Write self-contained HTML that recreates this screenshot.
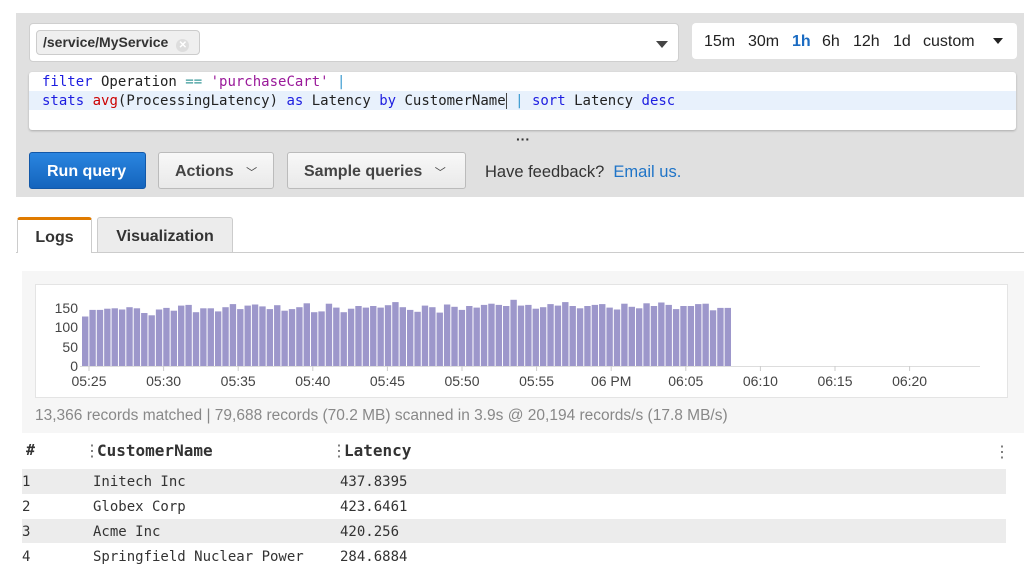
<!DOCTYPE html>
<html><head><meta charset="utf-8"><style>
*{box-sizing:border-box;margin:0;padding:0}
body{width:1024px;height:573px;background:#fff;font-family:"Liberation Sans",sans-serif;position:relative;overflow:hidden;color:#222}
.a{position:absolute}
.mono{font-family:"DejaVu Sans Mono","Liberation Mono",monospace}
.btn{position:absolute;top:152px;height:37px;border:1px solid #bbb;border-radius:3px;background:linear-gradient(#f8f8f8,#e9e9e9);font-weight:bold;font-size:16px;color:#444;line-height:38px;padding-left:16px}
.r{position:absolute;font-family:"DejaVu Sans Mono","Liberation Mono",monospace;font-size:14px;color:#333}
</style></head><body>
<div class="a" style="left:16px;top:13px;width:1008px;height:184px;background:#e0e0e0"></div>
<div class="a" style="left:29px;top:23px;width:650px;height:39px;background:#fff;border:1px solid #cfcfcf;border-radius:4px"></div>
<div class="a" style="left:36px;top:30px;width:164px;height:25px;background:#efefef;border:1px solid #ccc;border-radius:4px;font-size:14px;font-weight:bold;color:#333;line-height:23px;padding-left:6px">/service/MyService<span style="display:inline-block;width:13px;height:13px;border-radius:50%;background:#ddd;color:#fff;font-size:10px;line-height:13px;text-align:center;margin-left:8px;vertical-align:-1px">✕</span></div>
<div class="a" style="left:656px;top:41px;width:0;height:0;border-left:6px solid transparent;border-right:6px solid transparent;border-top:7px solid #444"></div>
<div class="a" style="left:692px;top:23px;width:325px;height:36px;background:#fff;border-radius:4px"></div>
<div class="a" style="left:704px;top:23px;font-size:16px;line-height:38px;color:#222;white-space:pre"><span>15m</span><span class="a" style="left:44px">30m</span><span class="a" style="left:88px;font-weight:bold;color:#1a6bc2">1h</span><span class="a" style="left:118px">6h</span><span class="a" style="left:149px">12h</span><span class="a" style="left:189px">1d</span><span class="a" style="left:219px">custom</span></div>
<div class="a" style="left:993px;top:38px;width:0;height:0;border-left:5px solid transparent;border-right:5px solid transparent;border-top:6px solid #222"></div>
<div class="a" style="left:29px;top:72px;width:987px;height:58px;background:#fff;border-radius:3px;box-shadow:0 1px 2px #aaa"></div>
<div class="a" style="left:29px;top:91px;width:987px;height:19px;background:#e8f1fc"></div>
<div class="a mono" style="left:42px;top:73px;font-size:14px;line-height:19px;color:#222;white-space:pre"><span style="color:#1d1de0">filter</span> Operation <span style="color:#3a9a9a">==</span> <span style="color:#9a1a9a">'purchaseCart'</span> <span style="color:#3a9ad0">|</span>
<span style="color:#1d1de0">stats</span> <span style="color:#c00">avg</span>(ProcessingLatency) <span style="color:#1d1de0">as</span> Latency <span style="color:#1d1de0">by</span> CustomerName<span style="border-left:1px solid #444"></span> <span style="color:#3a9ad0">|</span> <span style="color:#1d1de0">sort</span> Latency <span style="color:#1d1de0">desc</span></div>
<div class="a" style="left:516px;top:131px;font-size:14px;font-weight:bold;color:#333">···</div>
<div class="btn" style="left:29px;width:117px;background:linear-gradient(#2a85e0,#1464bd);border-color:#1258a8;color:#fff;padding-left:17px">Run query</div>
<div class="btn" style="left:158px;width:116px">Actions <span style="font-weight:normal;font-size:11px;margin-left:8px">﹀</span></div>
<div class="btn" style="left:287px;width:179px">Sample queries <span style="font-weight:normal;font-size:11px;margin-left:8px">﹀</span></div>
<div class="a" style="left:485px;top:163px;font-size:16.5px;color:#333">Have feedback?&nbsp; <span style="color:#1f74c7">Email us.</span></div>
<div class="a" style="left:16px;top:252px;width:1008px;height:1px;background:#ccc"></div>
<div class="a" style="left:17px;top:217px;width:75px;height:36px;background:#fff;border:1px solid #ccc;border-top:3px solid #e07b00;border-bottom:none;border-radius:3px 3px 0 0;font-weight:bold;font-size:16px;color:#333;line-height:36px;text-align:center">Logs</div>
<div class="a" style="left:97px;top:217px;width:136px;height:35px;background:#ececec;border:1px solid #ccc;border-bottom:none;border-radius:3px 3px 0 0;font-weight:bold;font-size:16px;color:#333;line-height:37px;text-align:center">Visualization</div>
<div class="a" style="left:22px;top:271px;width:1002px;height:162px;background:#f6f6f6"></div>
<div class="a" style="left:35px;top:284px;width:973px;height:114px;background:#fff;border:1px solid #e4e4e4"></div>
<svg class="a" style="left:0;top:0" width="1024" height="573" id="ch" font-family="Liberation Sans" font-size="14" fill="#444"></svg>
<div class="a" style="left:35px;top:407px;font-size:15.5px;color:#888">13,366 records matched | 79,688 records (70.2 MB) scanned in 3.9s @ 20,194 records/s (17.8 MB/s)</div>
<div class="a mono" style="left:26px;top:441px;font-size:15px;font-weight:bold;color:#333">#</div>
<div class="a" style="left:84px;top:441px;font-size:16px;color:#666">⋮</div>
<div class="a mono" style="left:97px;top:441px;font-size:16px;font-weight:bold;color:#333">CustomerName</div>
<div class="a" style="left:331px;top:441px;font-size:16px;color:#666">⋮</div>
<div class="a mono" style="left:344px;top:441px;font-size:16px;font-weight:bold;color:#333">Latency</div>
<div class="a" style="left:994px;top:442px;font-size:16px;color:#666">⋮</div>
<div class="a" style="left:22px;top:469px;width:984px;height:25px;background:#ececec"></div>
<div class="a" style="left:22px;top:519px;width:984px;height:24px;background:#ececec"></div>
<div class="r" style="left:22px;top:474px">1</div><div class="r" style="left:93px;top:474px">Initech Inc</div><div class="r" style="left:340px;top:474px">437.8395</div>
<div class="r" style="left:22px;top:499px">2</div><div class="r" style="left:93px;top:499px">Globex Corp</div><div class="r" style="left:340px;top:499px">423.6461</div>
<div class="r" style="left:22px;top:524px">3</div><div class="r" style="left:93px;top:524px">Acme Inc</div><div class="r" style="left:340px;top:524px">420.256</div>
<div class="r" style="left:22px;top:549px">4</div><div class="r" style="left:93px;top:549px">Springfield Nuclear Power</div><div class="r" style="left:340px;top:549px">284.6884</div>
<script>
var s=document.getElementById('ch'),h='';
var v=[128,145,145,148,149,146,152,149,137,131,146,150,143,156,158,139,149,149,141,152,160,147,156,159,154,147,157,143,147,152,162,139,141,161,151,139,148,155,151,155,151,157,165,152,145,140,156,152,138,159,153,145,155,151,158,161,158,155,171,156,158,148,152,160,156,165,155,149,155,158,160,151,146,161,153,149,162,155,164,158,147,155,155,160,161,144,150,150];
var n=v.length,x0=82,w=650/n;
for(var i=0;i<n;i++){var hh=v[i]*0.387;h+='<rect x="'+(x0+i*w).toFixed(2)+'" y="'+(366-hh).toFixed(1)+'" width="'+(w-1).toFixed(2)+'" height="'+hh.toFixed(1)+'" fill="#9d97cb"/>';}
h+='<line x1="80" y1="366.5" x2="980" y2="366.5" stroke="#ddd"/>';
var t=['05:25','05:30','05:35','05:40','05:45','05:50','05:55','06 PM','06:05','06:10','06:15','06:20'];
for(var i=0;i<t.length;i++){var x=89+i*74.6;h+='<line x1="'+x+'" y1="366" x2="'+x+'" y2="371" stroke="#ccc"/><text x="'+x+'" y="386" text-anchor="middle">'+t[i]+'</text>';}
var y=[[0,366],[50,347],[100,327],[150,308]];
y.forEach(function(a){h+='<text x="78" y="'+(a[1]+5)+'" text-anchor="end">'+a[0]+'</text>';});
s.innerHTML=h;
</script>
</body></html>
